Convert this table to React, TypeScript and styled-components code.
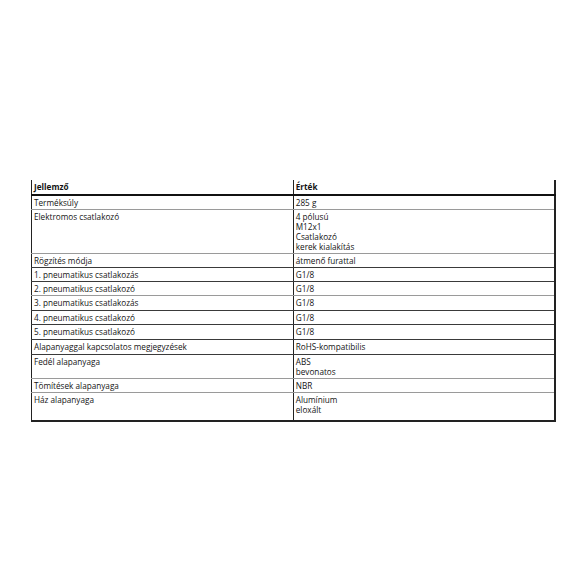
import React from "react";
import styled, { createGlobalStyle } from "styled-components";

const GlobalStyle = createGlobalStyle`
  html, body {
    margin: 0;
    padding: 0;
    background: #ffffff;
  }
`;

const Page = styled.div`
  width: 585px;
  height: 585px;
  box-sizing: border-box;
  padding: 180px 29px 0 31px;
  font-family: "Open Sans", "Noto Sans", sans-serif;
  color: #141414;
`;

const Table = styled.table`
  width: 525px;
  border-collapse: collapse;
  table-layout: fixed;
  border-left: 1px solid #222;
  border-right: 2px solid #222;
  border-bottom: 2px solid #222;
  font-size: 8.2px;
`;

const HeadCell = styled.th<{ $divider?: boolean }>`
  text-align: left;
  font-weight: 700;
  padding: 1px 2px 2px;
  line-height: 11px;
  border-bottom: 2px solid #111;
  border-left: ${(p) => (p.$divider ? "1px solid #222" : "none")};
`;

const Cell = styled.td<{ $divider?: boolean; $soft?: boolean; $extra?: number }>`
  vertical-align: top;
  padding: 2px 2px ${(p) => 1 + (p.$extra ?? 0)}px;
  line-height: 10px;
  border-bottom: 1px solid ${(p) => (p.$soft ? "#9a9a9a" : "#3a3a3a")};
  border-left: ${(p) => (p.$divider ? "1px solid #222" : "none")};
`;

const Line = styled.div`
  white-space: nowrap;
`;

type Row = { label: string; values: string[]; soft?: boolean; extra?: number };

const rows: Row[] = [
  { label: "Terméksúly", values: ["285 g"], soft: true },
  {
    label: "Elektromos csatlakozó",
    values: ["4 pólusú", "M12x1", "Csatlakozó", "kerek kialakítás"],
    soft: true,
  },
  { label: "Rögzítés módja", values: ["átmenő furattal"] },
  { label: "1. pneumatikus csatlakozás", values: ["G1/8"] },
  { label: "2. pneumatikus csatlakozó", values: ["G1/8"], soft: true },
  { label: "3. pneumatikus csatlakozás", values: ["G1/8"], extra: 1 },
  { label: "4. pneumatikus csatlakozó", values: ["G1/8"] },
  { label: "5. pneumatikus csatlakozó", values: ["G1/8"], extra: 1 },
  { label: "Alapanyaggal kapcsolatos megjegyzések", values: ["RoHS-kompatibilis"], extra: 1 },
  { label: "Fedél alapanyaga", values: ["ABS", "bevonatos"], soft: true },
  { label: "Tömítések alapanyaga", values: ["NBR"], soft: true },
  { label: "Ház alapanyaga", values: ["Alumínium", "eloxált"], extra: 4 },
];

export default function App() {
  return (
    <>
      <GlobalStyle />
      <Page>
        <Table>
          <thead>
            <tr>
              <HeadCell>Jellemző</HeadCell>
              <HeadCell $divider>Érték</HeadCell>
            </tr>
          </thead>
          <tbody>
            {rows.map((r) => (
              <tr key={r.label}>
                <Cell $soft={r.soft} $extra={r.extra}>
                  {r.label}
                </Cell>
                <Cell $divider $soft={r.soft} $extra={r.extra}>
                  {r.values.map((v) => (
                    <Line key={v}>{v}</Line>
                  ))}
                </Cell>
              </tr>
            ))}
          </tbody>
        </Table>
      </Page>
    </>
  );
}
